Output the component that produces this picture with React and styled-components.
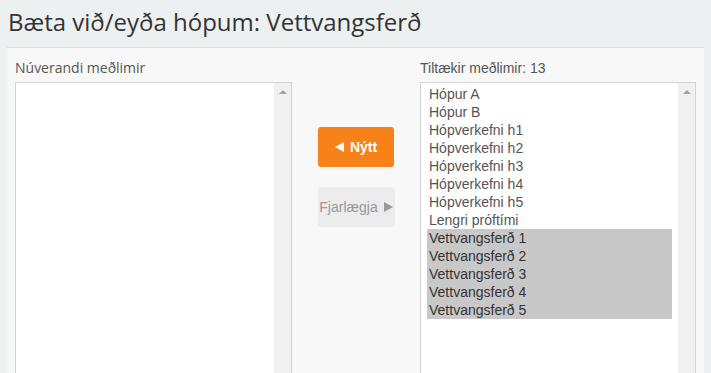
import React from 'react';
import styled, { createGlobalStyle } from 'styled-components';

const Global = createGlobalStyle`
  html, body {
    margin: 0;
    padding: 0;
    background: #ecf0f1;
    overflow: hidden;
  }
`;

const Page = styled.div`
  height: 100vh;
  display: flex;
  flex-direction: column;
  overflow: hidden;
`;

const Header = styled.div`
  flex: none;
  height: 47px;
  padding-left: 8px;
  display: flex;
  align-items: center;
`;

const Title = styled.h1`
  margin: 0;
  font-family: "Open Sans", sans-serif;
  font-weight: 400;
  font-size: 24px;
  color: #333;
  padding-bottom: 4px;
`;

const Panel = styled.div`
  flex: 1;
  min-height: 0;
  margin: 0 7px;
  border-top: 1px solid #dcdcdc;
  background: #f8f8f8;
  padding: 10px 8px 0;
  display: grid;
  grid-template-columns: 277px 128px 276px;
  overflow: hidden;
`;

const Column = styled.div`
  display: flex;
  flex-direction: column;
  min-height: 0;
`;

const Label = styled.div`
  flex: none;
  height: 24px;
  font-family: ${({ arial }) => (arial ? '"Liberation Sans", Arial, sans-serif' : '"Open Sans", sans-serif')};
  font-size: 14px;
  color: #555;
  line-height: 20px;
`;

const ListBox = styled.div`
  flex: 1;
  margin-bottom: -20px;
  border: 1px solid #d3d3d3;
  background: #fff;
  display: flex;
`;

const Items = styled.div`
  flex: 1;
  padding: 2px 6px 0 6px;
  font-family: "Liberation Sans", Arial, sans-serif;
  font-size: 14px;
  line-height: 18px;
`;

const Item = styled.div`
  padding: 0 2px;
  color: ${({ selected }) => (selected ? '#333' : '#555')};
  background: ${({ selected }) => (selected ? '#c8c8c8' : 'transparent')};
`;

const ScrollTrack = styled.div`
  width: 17px;
  background: #f0f0f0;
  display: flex;
  justify-content: center;
  padding-top: 7px;
  box-sizing: border-box;
`;

const UpArrow = styled.div`
  width: 0;
  height: 0;
  border-left: 4px solid transparent;
  border-right: 4px solid transparent;
  border-bottom: 4px solid #a3a3a3;
`;

const Middle = styled.div`
  display: flex;
  flex-direction: column;
  align-items: center;
  padding-top: 69px;
  gap: 20px;
`;

const Button = styled.button`
  width: ${({ primary }) => (primary ? '76px' : '77px')};
  height: 40px;
  border: none;
  border-radius: 3px;
  padding: 0;
  display: flex;
  align-items: center;
  justify-content: center;
  gap: 6px;
  white-space: nowrap;
  font-family: "Liberation Sans", Arial, sans-serif;
  font-size: 14px;
  font-weight: ${({ primary }) => (primary ? 700 : 400)};
  color: ${({ primary }) => (primary ? '#fff' : '#999')};
  background: ${({ primary }) => (primary ? '#f88219' : '#ececec')};
  cursor: pointer;
`;

const Arrow = ({ dir }) => (
  <svg width="9" height="10" viewBox="0 0 9 10" style={{ flex: 'none' }}>
    <polygon points={dir === 'left' ? '9,0 9,10 0,5' : '0,0 0,10 9,5'} fill="currentColor" />
  </svg>
);

const available = [
  'Hópur A',
  'Hópur B',
  'Hópverkefni h1',
  'Hópverkefni h2',
  'Hópverkefni h3',
  'Hópverkefni h4',
  'Hópverkefni h5',
  'Lengri próftími',
  'Vettvangsferð 1',
  'Vettvangsferð 2',
  'Vettvangsferð 3',
  'Vettvangsferð 4',
  'Vettvangsferð 5',
];

const List = ({ items = [] }) => (
  <ListBox>
    <Items>
      {items.map((name) => (
        <Item key={name} selected={name.startsWith('Vettvangs')}>
          {name}
        </Item>
      ))}
    </Items>
    <ScrollTrack>
      <UpArrow />
    </ScrollTrack>
  </ListBox>
);

export default function App() {
  return (
    <Page>
      <Global />
      <Header>
        <Title>Bæta við/eyða hópum: Vettvangsferð</Title>
      </Header>
      <Panel>
        <Column>
          <Label>Núverandi meðlimir</Label>
          <List />
        </Column>
        <Middle>
          <Button primary><Arrow dir="left" />Nýtt</Button>
          <Button disabled>Fjarlægja<Arrow dir="right" /></Button>
        </Middle>
        <Column>
          <Label arial>Tiltækir meðlimir: {available.length}</Label>
          <List items={available} />
        </Column>
      </Panel>
    </Page>
  );
}
